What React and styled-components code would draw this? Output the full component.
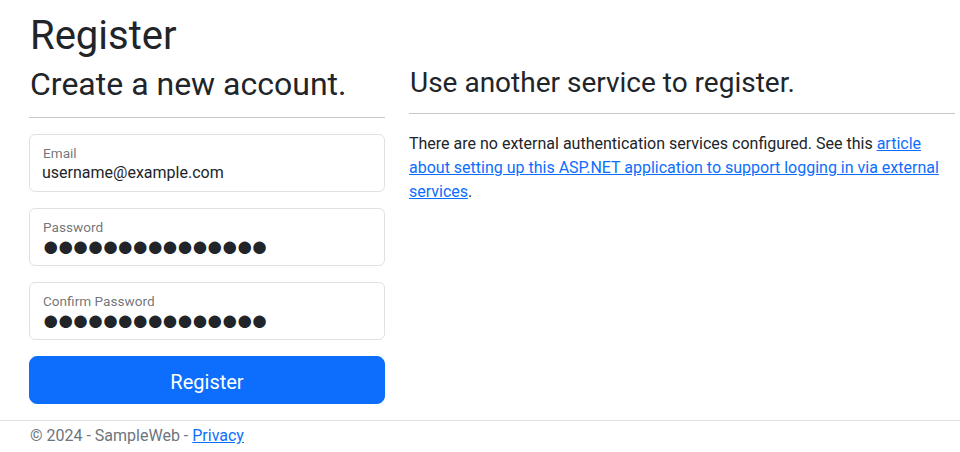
import React from "react";
import styled, { createGlobalStyle } from "styled-components";

const Global = createGlobalStyle`
  html, body { margin: 0; padding: 0; background: #fff; }
  body {
    font-family: Roboto, "Liberation Sans", Arial, sans-serif;
    font-size: 16px;
    line-height: 24px;
    color: #212529;
    -webkit-font-smoothing: antialiased;
  }
  * { box-sizing: border-box; }
`;

const Page = styled.div`
  display: flex;
  flex-direction: column;
  width: 960px;
  height: 452px;
  overflow: hidden;
`;

const Main = styled.main`
  padding: 12px 5px 0 29px;
`;

const Title = styled.h1`
  margin: 0 0 5px 1px;
  font-size: 40px;
  line-height: 48px;
  font-weight: 400;
`;

const Row = styled.div`
  display: grid;
  grid-template-columns: 356px 546px;
  column-gap: 24px;
  align-items: start;
`;

const Column = styled.section`
  display: flex;
  flex-direction: column;
`;

const Heading = styled.h2`
  margin: ${(p) => (p.$small ? "1px" : "0")} 0 0 1px;
  font-size: ${(p) => (p.$small ? "28px" : "32px")};
  line-height: ${(p) => (p.$small ? "33.6px" : "38.4px")};
  font-weight: 400;
`;

const Rule = styled.hr`
  margin: ${(p) => p.$top}px 0 16px;
  border: 0;
  border-top: 1px solid rgba(33, 37, 41, 0.25);
  width: 100%;
`;

const Form = styled.form`
  display: flex;
  flex-direction: column;
  gap: 16px;
`;

const Field = styled.div`
  display: flex;
  flex-direction: column;
  height: 58px;
  border: 1px solid #dee2e6;
  border-radius: 6px;
  padding: 10px 12px 0 12px;
  background: #fff;
`;

const Label = styled.label`
  font-size: 13.6px;
  line-height: 16px;
  color: rgba(33, 37, 41, 0.65);
  margin-left: 1px;
`;

const Value = styled.input`
  margin-top: 2px;
  border: 0;
  padding: 0;
  height: 20px;
  font-family: inherit;
  font-size: 16px;
  line-height: 20px;
  color: #212529;
  background: transparent;
  outline: none;
  width: 100%;
`;

const Mask = styled.input`
  margin-top: -1px;
  border: 0;
  padding: 0;
  height: 24px;
  font-family: "Liberation Sans", sans-serif;
  font-size: 29px;
  line-height: 24px;
  letter-spacing: -2.6px;
  color: #212529;
  background: transparent;
  outline: none;
  width: 100%;
`;

const Button = styled.button`
  height: 48px;
  border: 1px solid #0d6efd;
  border-radius: 8px;
  background: #0d6efd;
  color: #fff;
  font-family: inherit;
  font-size: 20px;
  line-height: 30px;
  padding: 3px 16px 0;
  cursor: pointer;
`;

const Text = styled.p`
  margin: 2px 0 0;
  font-size: 16px;
  line-height: 24px;
`;

const Link = styled.a`
  color: #0d6efd;
  text-decoration: underline;
`;

const Footer = styled.footer`
  margin-top: 16px;
  border-top: 1px solid #dee2e6;
  padding: 3px 0 0 30px;
  color: #6c757d;
  line-height: 24px;
  white-space: nowrap;
`;

const DOTS = "\u25CF".repeat(15);

export default function App() {
  return (
    <>
      <Global />
      <Page>
        <Main>
          <Title>Register</Title>
          <Row>
            <Column>
              <Heading>Create a new account.</Heading>
              <Rule $top={14} />
              <Form onSubmit={(e) => e.preventDefault()}>
                <Field>
                  <Label htmlFor="email">Email</Label>
                  <Value id="email" type="text" readOnly value="username@example.com" />
                </Field>
                <Field>
                  <Label htmlFor="pw">Password</Label>
                  <Mask id="pw" type="text" readOnly value={DOTS} />
                </Field>
                <Field>
                  <Label htmlFor="pw2">Confirm Password</Label>
                  <Mask id="pw2" type="text" readOnly value={DOTS} />
                </Field>
                <Button type="submit">Register</Button>
              </Form>
            </Column>
            <Column>
              <Heading as="h3" $small>Use another service to register.</Heading>
              <Rule $top={13} />
              <Text>
                There are no external authentication services configured. See this{" "}
                <Link href="#">
                  article about setting up this ASP.NET application to support logging in via external services
                </Link>
                .
              </Text>
            </Column>
          </Row>
        </Main>
        <Footer>
          © 2024 - SampleWeb - <Link href="#">Privacy</Link>
        </Footer>
      </Page>
    </>
  );
}
